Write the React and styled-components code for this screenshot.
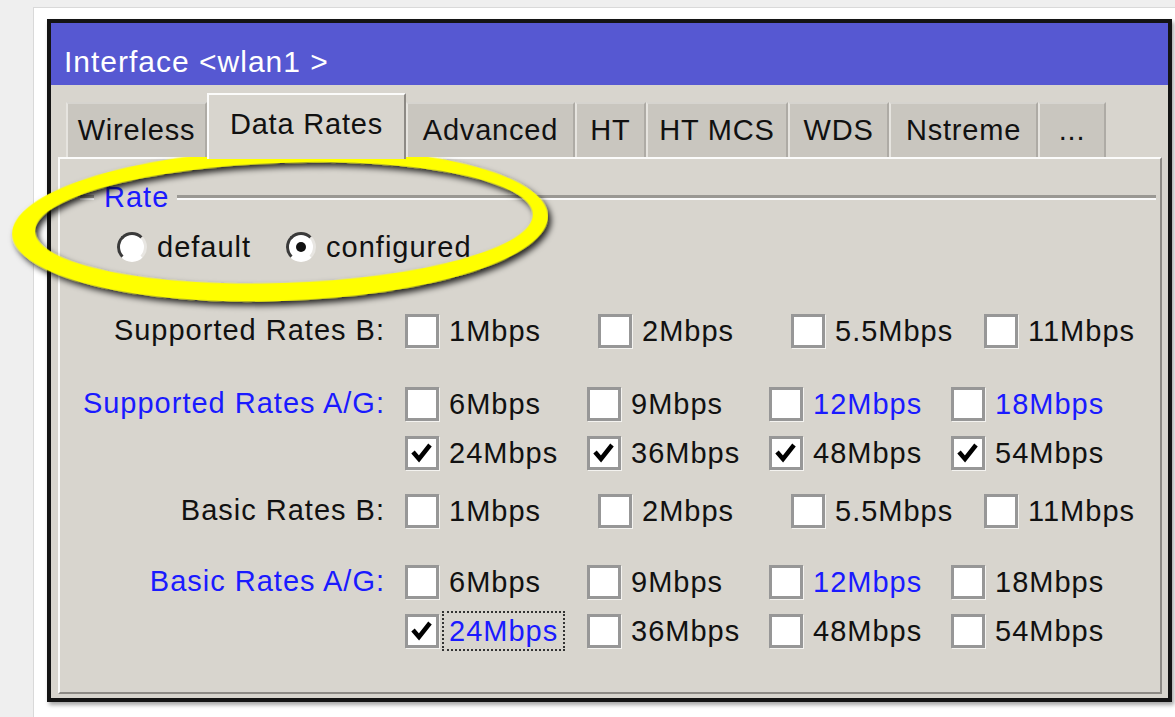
import React from "react";
import styled, { createGlobalStyle } from "styled-components";

const GlobalStyle = createGlobalStyle`
  html, body {
    margin: 0;
    padding: 0;
    background: #efefef;
    overflow: hidden;
  }
  body {
    font-family: "Liberation Sans", Arial, sans-serif;
    font-size: 29px;
    letter-spacing: 1px;
    color: #111;
  }
`;

const Page = styled.div`
  position: relative;
  width: 1175px;
  height: 717px;
  overflow: hidden;
`;

const Frame = styled.div`
  margin: 7px 0 0 33px;
  padding: 11px 0 20px 13px;
  background: #fff;
  border-top: 1px solid #d9d9d9;
  border-left: 1px solid #d9d9d9;
  height: 760px;
  width: 1200px;
`;

const Window = styled.div`
  width: 1125px;
  height: 683px;
  box-sizing: border-box;
  border: 4px solid #141414;
  display: flex;
  flex-direction: column;
  box-shadow: 2px 3px 4px rgba(0, 0, 0, 0.35);
`;

const TitleBar = styled.div`
  height: 62px;
  flex-shrink: 0;
  box-sizing: border-box;
  background: #5658d2;
  color: #fff;
  display: flex;
  align-items: flex-end;
  padding: 0 0 8px 13px;
  font-size: 30px;
  line-height: 30px;
  letter-spacing: 1px;
`;

const WindowBody = styled.div`
  flex: 1;
  background: #d8d5ce;
  display: flex;
  flex-direction: column;
  padding: 8px 6px 4px 7px;
`;

const TabRow = styled.div`
  display: flex;
  align-items: flex-end;
  height: 64px;
  margin-left: 8px;
  position: relative;
  z-index: 1;
`;

const Tab = styled.div`
  box-sizing: border-box;
  display: flex;
  align-items: center;
  justify-content: center;
  white-space: nowrap;
  letter-spacing: 0.8px;
  width: ${(p) => p.$w}px;
  height: ${(p) => (p.$active ? "66px" : "55px")};
  margin-bottom: ${(p) => (p.$active ? "-2px" : "0")};
  padding-bottom: ${(p) => (p.$active ? "6px" : "0")};
  background: ${(p) => (p.$active ? "#d8d5ce" : "#c9c6bf")};
  border-top: 2px solid ${(p) => (p.$active ? "#fbfbfa" : "#d6d4cf")};
  border-left: 2px solid ${(p) => (p.$active ? "#fbfbfa" : "#e6e4df")};
  border-right: 2px solid ${(p) => (p.$active ? "#8d8a85" : "#aeaba5")};
`;

const Panel = styled.div`
  flex: 1;
  border-top: 2px solid #fbfbfa;
  border-left: 2px solid #fbfbfa;
  border-right: 2px solid #8d8a85;
  border-bottom: 2px solid #8d8a85;
  padding: 21px 4px 0 20px;
`;

const Legend = styled.div`
  display: flex;
  align-items: center;
  height: 34px;
  line-height: 34px;
`;

const Etch = styled.div`
  height: 0;
  border-top: 3px solid #9a9893;
  border-bottom: 2px solid #fafafa;
  width: ${(p) => (p.$grow ? "auto" : "14px")};
  flex: ${(p) => (p.$grow ? "1" : "none")};
`;

const LegendText = styled.span`
  color: #1a1aff;
  padding: 0 8px 0 10px;
`;

const RadioRow = styled.div`
  display: flex;
  align-items: center;
  height: 34px;
  margin: 16px 0 0 37px;
  gap: 35px;
`;

const RadioItem = styled.label`
  display: flex;
  align-items: center;
  gap: 10px;
`;

const RadioDot = styled.span`
  width: 30px;
  height: 30px;
  box-sizing: border-box;
  border-radius: 50%;
  background: #fff;
  border: 3px solid;
  border-color: #3a3a3a #e8e6e2 #ffffff #3a3a3a;
  display: flex;
  align-items: center;
  justify-content: center;

  &::after {
    content: "";
    width: 10px;
    height: 10px;
    border-radius: 50%;
    background: ${(p) => (p.$on ? "#111" : "transparent")};
  }
`;

const Rates = styled.div`
  margin-top: 42px;
`;

const RateSet = styled.div`
  display: grid;
  grid-template-columns: 305px auto;
  column-gap: 20px;
  margin-top: ${(p) => p.$gap}px;
`;

const SetLabel = styled.div`
  text-align: right;
  height: 49px;
  line-height: 49px;
  white-space: nowrap;
  color: ${(p) => (p.$blue ? "#1a1aff" : "#111")};
`;

const Options = styled.div`
  display: grid;
  grid-template-columns: repeat(4, ${(p) => p.$col}px);
  grid-auto-rows: 49px;
`;

const Option = styled.div`
  display: flex;
  align-items: center;
  gap: 3px;
`;

const Box = styled.span`
  width: 34px;
  height: 34px;
  box-sizing: border-box;
  background: #fff;
  border: 3px solid #979797;
  box-shadow: 1px 1px 0 #f4f3f0;
  flex-shrink: 0;
  display: flex;
  align-items: center;
  justify-content: center;
`;

const OptionText = styled.span`
  border: 2px dotted ${(p) => (p.$focus ? "#333" : "transparent")};
  padding: 0 5px;
  line-height: 36px;
  white-space: nowrap;
  color: ${(p) => (p.$blue ? "#1a1aff" : "#111")};
`;

const Check = () => (
  <svg width="28" height="28" viewBox="0 0 28 28">
    <polyline
      points="5,13 11,20 22,6"
      fill="none"
      stroke="#000"
      strokeWidth="4.5"
      strokeLinejoin="miter"
    />
  </svg>
);

const Highlight = styled.svg`
  position: absolute;
  left: 0;
  top: 0;
  pointer-events: none;
`;

const tabs = [
  { name: "Wireless", w: 141 },
  { name: "Data Rates", w: 199, active: true },
  { name: "Advanced", w: 169 },
  { name: "HT", w: 71 },
  { name: "HT MCS", w: 142 },
  { name: "WDS", w: 101 },
  { name: "Nstreme", w: 149 },
  { name: "...", w: 68 },
];

const bRates = ["1Mbps", "2Mbps", "5.5Mbps", "11Mbps"].map((name) => ({ name }));

const agRates = (checked, blue, focus) =>
  ["6Mbps", "9Mbps", "12Mbps", "18Mbps", "24Mbps", "36Mbps", "48Mbps", "54Mbps"].map((name) => ({
    name,
    checked: checked.includes(name),
    blue: blue.includes(name),
    focus: name === focus,
  }));

const rateSets = [
  { label: "Supported Rates B:", col: 193, gap: 0, items: bRates },
  {
    label: "Supported Rates A/G:",
    blue: true,
    col: 182,
    gap: 24,
    items: agRates(["24Mbps", "36Mbps", "48Mbps", "54Mbps"], ["12Mbps", "18Mbps"]),
  },
  { label: "Basic Rates B:", col: 193, gap: 9, items: bRates },
  {
    label: "Basic Rates A/G:",
    blue: true,
    col: 182,
    gap: 22,
    items: agRates(["24Mbps"], ["12Mbps", "24Mbps"], "24Mbps"),
  },
];

// ring drawn as the gap between two ellipses, thicker on the lower left
const ringPath =
  "M12,225 a268,76 0 1,0 536,0 a268,76 0 1,0 -536,0 Z " +
  "M35,223 a249,60 0 1,0 498,0 a249,60 0 1,0 -498,0 Z";

const App = () => {
  return (
    <Page>
      <GlobalStyle />
      <Frame>
        <Window>
          <TitleBar>Interface &lt;wlan1 &gt;</TitleBar>
          <WindowBody>
            <TabRow>
              {tabs.map((t) => (
                <Tab key={t.name} $w={t.w} $active={t.active}>
                  {t.name}
                </Tab>
              ))}
            </TabRow>
            <Panel>
              <Legend>
                <Etch />
                <LegendText>Rate</LegendText>
                <Etch $grow />
              </Legend>
              <RadioRow>
                <RadioItem>
                  <RadioDot />
                  default
                </RadioItem>
                <RadioItem>
                  <RadioDot $on />
                  configured
                </RadioItem>
              </RadioRow>
              <Rates>
                {rateSets.map((set) => (
                  <RateSet key={set.label} $gap={set.gap}>
                    <SetLabel $blue={set.blue}>{set.label}</SetLabel>
                    <Options $col={set.col}>
                      {set.items.map((it) => (
                        <Option key={it.name}>
                          <Box>{it.checked && <Check />}</Box>
                          <OptionText $blue={it.blue} $focus={it.focus}>
                            {it.name}
                          </OptionText>
                        </Option>
                      ))}
                    </Options>
                  </RateSet>
                ))}
              </Rates>
            </Panel>
          </WindowBody>
        </Window>
      </Frame>
      <Highlight width="1175" height="717" viewBox="0 0 1175 717">
        <defs>
          <filter id="ringShadow" x="-10%" y="-30%" width="120%" height="160%">
            <feDropShadow dx="3" dy="4" stdDeviation="3" floodColor="#000" floodOpacity="0.85" />
          </filter>
        </defs>
        <path
          d={ringPath}
          fill="#ffff00"
          fillRule="evenodd"
          filter="url(#ringShadow)"
          transform="rotate(-2 280 225)"
        />
      </Highlight>
    </Page>
  );
};

export default App;
